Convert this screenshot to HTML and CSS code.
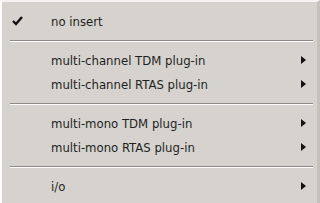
FILE: index.html
```html
<!DOCTYPE html>
<html>
<head>
<meta charset="utf-8">
<link rel="stylesheet" href="styles.css">
</head>
<body>
<div class="menu">
  <div class="item">
    <span class="check"><svg width="11" height="10" viewBox="0 0 11 10"><path d="M1 5 L4 8 L10 1" fill="none" stroke="#111" stroke-width="2.4"/></svg></span>
    <span class="label">no insert</span>
  </div>
  <div class="sep"></div>
  <div class="item">
    <span class="check"></span>
    <span class="label">multi-channel TDM plug-in</span>
    <span class="arrow"></span>
  </div>
  <div class="item">
    <span class="check"></span>
    <span class="label">multi-channel RTAS plug-in</span>
    <span class="arrow"></span>
  </div>
  <div class="sep"></div>
  <div class="item">
    <span class="check"></span>
    <span class="label">multi-mono TDM plug-in</span>
    <span class="arrow"></span>
  </div>
  <div class="item">
    <span class="check"></span>
    <span class="label">multi-mono RTAS plug-in</span>
    <span class="arrow"></span>
  </div>
  <div class="sep"></div>
  <div class="item">
    <span class="check"></span>
    <span class="label">i/o</span>
    <span class="arrow"></span>
  </div>
</div>
</body>
</html>
```
FILE: styles.css
```css
html, body {
  margin: 0;
  padding: 0;
  background: #d6d3ce;
}
.menu {
  box-sizing: border-box;
  width: 320px;
  height: 203px;
  background: #d6d3ce;
  border-left: 2px solid #ffffff;
  border-top: 2px solid #f4f3f1;
  border-right: 3px solid #c4c1bb;
  padding: 7px 0 0 0;
  font-family: "DejaVu Sans Condensed", "DejaVu Sans", sans-serif;
  font-size: 13px;
  color: #1f1f1f;
  display: flex;
  flex-direction: column;
}
.item {
  display: flex;
  align-items: center;
  height: 24px;
}
.check {
  width: 49px;
  box-sizing: border-box;
  padding-left: 10px;
  display: flex;
  align-items: center;
}
.label {
  flex: 1;
}
.arrow {
  width: 0;
  height: 0;
  border-top: 4px solid transparent;
  border-bottom: 4px solid transparent;
  border-left: 5px solid #111;
  margin-right: 11px;
}
.sep {
  height: 15px;
  box-sizing: border-box;
  padding-top: 7px;
  margin: 0 4px 0 8px;
}
.sep::before {
  content: "";
  display: block;
  height: 1px;
  background: #8e8b86;
  border-bottom: 1px solid #ffffff;
}
```
